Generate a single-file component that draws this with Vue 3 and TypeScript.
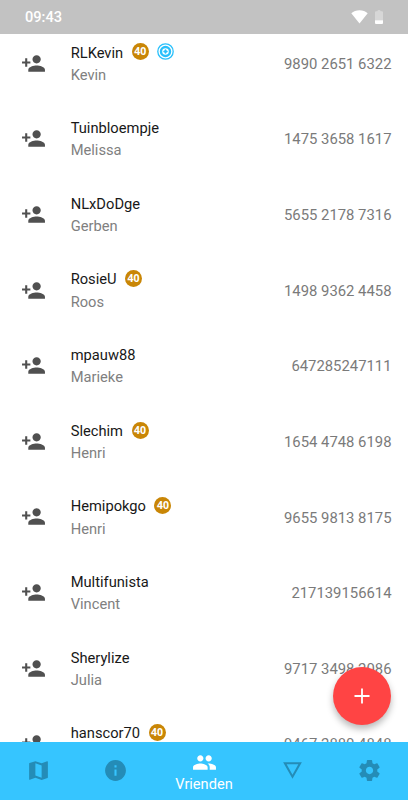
<script setup lang="ts">
interface Friend {
  name: string
  person?: string
  code: string
  level?: number
  medal?: boolean
}

const friends: Friend[] = [
  { name: 'RLKevin', person: 'Kevin', code: '9890 2651 6322', level: 40, medal: true },
  { name: 'Tuinbloempje', person: 'Melissa', code: '1475 3658 1617' },
  { name: 'NLxDoDge', person: 'Gerben', code: '5655 2178 7316' },
  { name: 'RosieU', person: 'Roos', code: '1498 9362 4458', level: 40 },
  { name: 'mpauw88', person: 'Marieke', code: '647285247111' },
  { name: 'Slechim', person: 'Henri', code: '1654 4748 6198', level: 40 },
  { name: 'Hemipokgo', person: 'Henri', code: '9655 9813 8175', level: 40 },
  { name: 'Multifunista', person: 'Vincent', code: '217139156614' },
  { name: 'Sherylize', person: 'Julia', code: '9717 3498 2086' },
  { name: 'hanscor70', code: '9467 2880 4848', level: 40 },
]

interface Tab {
  id: string
  path: string
  label?: string
}

const tabs: Tab[] = [
  { id: 'map', path: 'M20.5 3l-.16.03L15 5.1 9 3 3.36 4.9c-.21.07-.36.25-.36.48V20.5c0 .28.22.5.5.5l.16-.03L9 18.9l6 2.1 5.64-1.9c.21-.07.36-.25.36-.48V3.5c0-.28-.22-.5-.5-.5zM15 19l-6-2.11V5l6 2.11V19z' },
  { id: 'info', path: 'M12 2C6.48 2 2 6.48 2 12s4.48 10 10 10 10-4.48 10-10S17.52 2 12 2zm1 15h-2v-6h2v6zm0-8h-2V7h2v2z' },
  { id: 'friends', label: 'Vrienden', path: 'M16 11c1.66 0 2.99-1.34 2.99-3S17.66 5 16 5c-1.66 0-3 1.34-3 3s1.34 3 3 3zm-8 0c1.66 0 2.99-1.34 2.99-3S9.66 5 8 5C6.34 5 5 6.34 5 8s1.34 3 3 3zm0 2c-2.33 0-7 1.17-7 3.5V19h14v-2.5c0-2.33-4.67-3.5-7-3.5zm8 0c-.29 0-.62.02-.97.05 1.16.84 1.97 1.97 1.97 3.45V19h6v-2.5c0-2.33-4.67-3.5-7-3.5z' },
  { id: 'details', path: 'M3 4l9 16 9-16H3zm3.38 2h11.25L12 16 6.38 6z' },
  { id: 'settings', path: 'M19.43 12.98c.04-.32.07-.64.07-.98s-.03-.66-.07-.98l2.11-1.65c.19-.15.24-.42.12-.64l-2-3.46c-.12-.22-.39-.3-.61-.22l-2.49 1c-.52-.4-1.08-.73-1.69-.98l-.38-2.65C14.46 2.18 14.25 2 14 2h-4c-.25 0-.46.18-.49.42l-.38 2.65c-.61.25-1.17.59-1.69.98l-2.49-1c-.23-.09-.49 0-.61.22l-2 3.46c-.13.22-.07.49.12.64l2.11 1.65c-.04.32-.07.65-.07.98s.03.66.07.98l-2.11 1.65c-.19.15-.24.42-.12.64l2 3.46c.12.22.39.3.61.22l2.49-1c.52.4 1.08.73 1.69.98l.38 2.65c.03.24.24.42.49.42h4c.25 0 .46-.18.49-.42l.38-2.65c.61-.25 1.17-.59 1.69-.98l2.49 1c.23.09.49 0 .61-.22l2-3.46c.12-.22.07-.49-.12-.64l-2.11-1.65zM12 15.5c-1.93 0-3.5-1.57-3.5-3.5s1.57-3.5 3.5-3.5 3.5 1.57 3.5 3.5-1.57 3.5-3.5 3.5z' },
]
</script>

<template>
  <div class="screen">
    <header class="status">
      <span class="clock">09:43</span>
      <svg class="wifi" viewBox="0 0 17 14"><path d="M8.5 13.5L.3 3.2C2.5 1.3 5.3.3 8.5.3s6 1 8.2 2.9z" /></svg>
      <svg class="battery" viewBox="0 0 8 14">
        <path class="cell" d="M0 2.3Q0 1.3 1 1.3H2.3Q2.5 0 4 0T5.7 1.3H7Q8 1.3 8 2.3V10.3H0z" />
        <path d="M0 10.3H8V13Q8 14 7 14H1Q0 14 0 13z" />
      </svg>
    </header>

    <main class="list">
      <div v-for="friend in friends" :key="friend.name" class="row">
        <svg class="add" viewBox="0 0 24 24">
          <path d="M15 12c2.21 0 4-1.79 4-4s-1.79-4-4-4-4 1.79-4 4 1.79 4 4 4zm-9-2V7H4v3H1v2h3v3h2v-3h3v-2H6zm9 4c-2.67 0-8 1.34-8 4v2h16v-2c0-2.66-5.33-4-8-4z" />
        </svg>
        <div class="who">
          <div class="name">
            <span class="nick">{{ friend.name }}</span>
            <span v-if="friend.level" class="level">{{ friend.level }}</span>
            <svg v-if="friend.medal" class="medal" viewBox="0 0 17 17">
              <circle cx="8.5" cy="8.5" r="7.7" fill="none" stroke="#29c0fb" stroke-width="1.3" />
              <circle cx="8.5" cy="8.5" r="4.5" fill="none" stroke="#29c0fb" stroke-width="2.4" />
              <circle cx="8.5" cy="8.5" r="2" fill="#72d5fc" />
              <path d="M8.5 6.5v4M6.5 8.5h4" stroke="#29c0fb" stroke-width="1" />
            </svg>
          </div>
          <div class="person">{{ friend.person }}</div>
        </div>
        <div class="code">{{ friend.code }}</div>
      </div>
    </main>

    <button class="fab" aria-label="Toevoegen">
      <svg viewBox="0 0 16 16"><path d="M8 .5v15M.5 8h15" /></svg>
    </button>

    <nav class="tabs">
      <div v-for="tab in tabs" :key="tab.id" class="tab" :class="{ active: tab.label }">
        <svg viewBox="0 0 24 24"><path :d="tab.path" /></svg>
        <span v-if="tab.label">{{ tab.label }}</span>
      </div>
    </nav>
  </div>
</template>

<style>
body {
  margin: 0;
  overflow: hidden;
}
</style>

<style scoped>
.screen {
  position: relative;
  display: flex;
  flex-direction: column;
  width: 408px;
  height: 800px;
  overflow: hidden;
  background: #fff;
  font-family: Roboto, "Liberation Sans", sans-serif;
  font-size: 14.7px;
}
.status {
  flex: none;
  display: flex;
  align-items: center;
  box-sizing: border-box;
  height: 33.5px;
  padding: 0 25.5px 0 25px;
  background: #c2c2c2;
  color: #fff;
}
.clock {
  flex: 1;
  font-size: 14.6px;
  font-weight: 500;
  line-height: 17px;
  padding-top: 2px;
}
.wifi {
  width: 17px;
  height: 14px;
  margin-right: 6.5px;
  fill: #fff;
}
.battery {
  width: 8px;
  height: 14px;
  fill: #fff;
}
.cell {
  opacity: 0.35;
}
.list {
  flex: 1;
  min-height: 0;
  overflow: hidden;
}
.row {
  display: flex;
  align-items: center;
  box-sizing: border-box;
  height: 75.65px;
  padding: 0 16.5px 0 21px;
}
.row:first-child {
  margin-top: -8.2px;
}
.add {
  width: 25px;
  height: 25px;
  margin-right: 24.7px;
  fill: #505050;
}
.who {
  flex: 1;
}
.name {
  display: flex;
  align-items: center;
  height: 22.5px;
  color: #181818;
}
.nick {
  padding-top: 1.4px;
}
.level {
  width: 17px;
  height: 17px;
  margin-left: 8.5px;
  border-radius: 50%;
  background: #c98606;
  color: #fff;
  font: 700 10.5px/17px "Open Sans", sans-serif;
  text-align: center;
}
.medal {
  width: 17px;
  height: 17px;
  margin-left: 8px;
}
.person {
  box-sizing: border-box;
  height: 22.5px;
  padding-top: 0.6px;
  line-height: 22.5px;
  color: #808080;
}
.code {
  padding-top: 1.2px;
  font-size: 14.85px;
  color: #7a7a7a;
}
.fab {
  position: absolute;
  right: 16.7px;
  bottom: 75px;
  display: flex;
  align-items: center;
  justify-content: center;
  width: 58px;
  height: 58px;
  padding: 0;
  border: 0;
  border-radius: 50%;
  background: #ff4444;
  box-shadow: 0 4px 7px rgba(0, 0, 0, 0.28);
}
.fab svg {
  width: 16px;
  height: 16px;
  fill: none;
  stroke: #fff;
  stroke-width: 1.8;
}
.tabs {
  flex: none;
  display: flex;
  height: 58.3px;
  background: #36c5ff;
}
.tab {
  flex: 1;
  display: flex;
  flex-direction: column;
  align-items: center;
  justify-content: center;
  color: #248cb7;
}
.tab.active {
  flex: 0 0 100px;
  padding-top: 1px;
  color: #fff;
}
.tab svg {
  width: 25px;
  height: 25px;
  fill: currentColor;
}
.tab span {
  height: 18px;
  line-height: 19px;
  font-size: 14.6px;
}
</style>
